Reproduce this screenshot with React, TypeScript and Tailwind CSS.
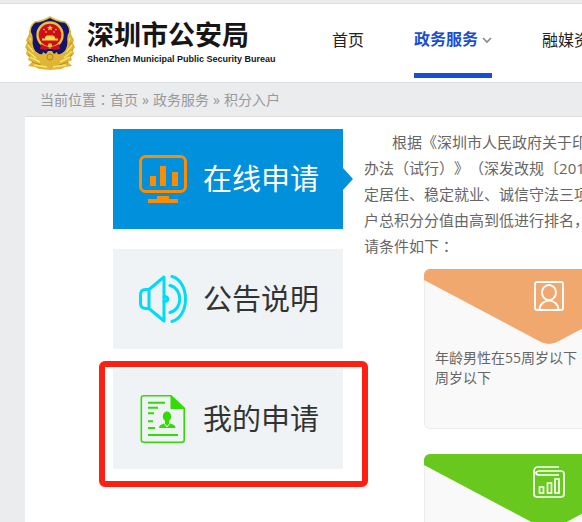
import type { ReactNode } from 'react'

const Emblem = () => (
  <svg viewBox="0 0 50 54" className="w-[50px] h-[54px] shrink-0" role="img" aria-label="警徽">
    {/* wheat wreath */}
    <path
      d="M9 9 Q4 13 4 18 L1 24 L2 27 L0 31 L2 34 L1 38 L4 41 L3 44 L7 46 L3 50 L10 51 L14 53 L25 54 L36 53 L40 51 L47 50 L43 46 L47 44 L46 41 L49 38 L48 34 L50 31 L48 27 L49 24 L46 18 Q46 13 41 9 Z"
      fill="#e0b536"
    />
    <path
      d="M3 26 L8 34 M2 33 L9 40 M3 39 L12 45 M7 46 L16 49 M47 26 L42 34 M48 33 L41 40 M47 39 L38 45 M43 46 L34 49"
      stroke="#b08424"
      strokeWidth=".8"
    />
    <path
      d="M5 22 L9 30 M3 29 L9 36 M3 35 L11 42 M5 41 L15 46 M45 22 L41 30 M47 29 L41 36 M47 35 L39 42 M45 41 L35 46 M9 49 L22 51 M41 49 L28 51"
      stroke="#f7e572"
      strokeWidth="1.5"
    />
    {/* shield */}
    <path
      d="M25 1 Q31 5 40 6 Q45 10 45 16 Q43 19 43 23 Q44 31 40 36 L36 39 H14 L10 36 Q6 31 7 23 Q7 19 5 16 Q5 10 10 6 Q19 5 25 1 Z"
      fill="#15146c"
      stroke="#e3b93a"
      strokeWidth="1.6"
    />
    <path
      d="M12 37 L17 39 L18 36 L21 38 L23 35 H27 L29 38 L32 36 L33 39 L38 37 Q34 44 25 47 Q16 44 12 37Z"
      fill="#e0b536"
    />
    <circle cx="25" cy="19" r="12.5" fill="#cd1018" stroke="#e8c13e" strokeWidth="2.4" />
    <path d="M16 28 Q25 34 34 28 L35 33 L29 34 L25 32 L21 34 L15 33Z" fill="#cd1018" />
    <g fill="#f7dc4a">
      <path d="M25 9 L25.800 11 H28 L26.300 12.400 L27 14.500 L25 13.200 L23 14.500 L23.700 12.400 L22 11 H24.200 Z" />
      <circle cx="19" cy="13.500" r=".8" />
      <circle cx="21" cy="16" r=".8" />
      <circle cx="29" cy="16" r=".8" />
      <circle cx="31" cy="13.500" r=".8" />
      <path d="M20 21 L22 19.500 H28 L30 21 V22.500 H33 V24.500 H17 V22.500 H20Z" />
    </g>
    <circle cx="25" cy="29.500" r="2.2" fill="#e8c13e" />
    <circle cx="25" cy="41" r="3" fill="none" stroke="#b08424" />
  </svg>
)

const MonitorIcon = () => (
  <svg viewBox="0 0 48 48" className="size-12 shrink-0" aria-hidden="true">
    <rect x="1.500" y="1.500" width="45" height="35" rx="5" fill="none" stroke="#ff8c00" strokeWidth="3" />
    <path d="M11 21h6v10h-6zM21 11h6v20h-6zM33 17h6v14h-6zM18 41h12v3h9v4H9v-4h9z" fill="#ff8c00" />
  </svg>
)

const SpeakerIcon = () => (
  <svg
    viewBox="0 0 48 48"
    className="size-12 shrink-0"
    fill="none"
    stroke="#00dcf5"
    strokeWidth="3"
    strokeLinecap="round"
    strokeLinejoin="round"
    aria-hidden="true"
  >
    <path d="M25 2v44L10 33.500H6.500Q1.500 33.500 1.500 28V20Q1.500 14.500 6.500 14.500H10ZM10 14.500v19" />
    <path d="M25 21.500c5 0 5 5 0 5M31 10.500c13 3 13 24 0 27M33 1.500c18 5 18 40 0 45" />
  </svg>
)

const ResumeIcon = () => (
  <svg viewBox="0 0 48 48" className="size-12 shrink-0" aria-hidden="true">
    <path
      d="M4 .8H32L45.200 13V45Q45.200 47.200 43 47.200H4.500Q2.300 47.200 2.300 45V3Q2.300 .8 4.500 .8Z"
      fill="none"
      stroke="#32dc00"
      strokeWidth="1.6"
    />
    <path d="M31.500 .8L45.500 14H31.500Z" fill="#32dc00" />
    <path d="M9 7.800h17M9 12.800h10M9 18.200h6M9 26.200h5M9 33h7M9 40h30" stroke="#32dc00" strokeWidth="2" />
    <ellipse cx="28" cy="21.500" rx="4.200" ry="5" fill="#32dc00" />
    <path d="M26 25h4v3l5 2q1.500 1 1.500 3H20q0-2 1.500-3L26 28z" fill="#32dc00" />
    <path d="M25 28l3 4 3-4" stroke="#eff3f6" fill="none" />
  </svg>
)

const PortraitIcon = () => (
  <svg viewBox="0 0 30 30" className="size-[30px]" fill="none" stroke="#fff" strokeWidth="1.9" aria-hidden="true">
    <rect x="1" y="1" width="28" height="28" rx="2" />
    <ellipse cx="15" cy="11.500" rx="7" ry="7.500" />
    <path d="M5.500 29C6 16.500 24 16.500 24.500 29" />
  </svg>
)

const LedgerIcon = () => (
  <svg viewBox="0 0 32 32" className="size-8" fill="none" stroke="#fff" strokeWidth="1.7" aria-hidden="true">
    <path d="M26 1H5Q1 1 1 6V28Q1 31 4 31H28Q31 31 31 28V8Q31 5 28 5H6Q3 5.500 3 7Q3 9 7 9H26" />
    <path d="M6.500 21h4v6h-4zM14.500 17h4v10h-4zM22 13h4v14h-4z" />
  </svg>
)

// full-width punctuation set in the middle of its cell
const Mark = ({ children }: { children: ReactNode }) => (
  <span className="font-['Noto_Sans_CJK_TC',sans-serif]">{children}</span>
)

const menu = [
  { label: '在线申请', icon: <MonitorIcon />, active: true, marked: false },
  { label: '公告说明', icon: <SpeakerIcon />, active: false, marked: false },
  { label: '我的申请', icon: <ResumeIcon />, active: false, marked: true },
]

const conditions = [
  { icon: <PortraitIcon />, fill: '#f0a86e', lines: ['年龄男性在55周岁以下', '周岁以下'] },
  { icon: <LedgerIcon />, fill: '#69c81e', lines: [] },
]

const Header = () => (
  <header className="border-y border-[#dcdee0] bg-white mt-[3px]">
    <div className="flex h-[78px] pl-[25px]">
      <a href="#" className="flex shrink-0 items-center gap-3 w-[307px]">
        <Emblem />
        <span className="flex flex-col text-[#161616] font-bold">
          <span className="text-[27px] leading-8">深圳市公安局</span>
          <span className="font-['Liberation_Sans',sans-serif] text-[9px] leading-4 whitespace-nowrap">
            ShenZhen Municipal Public Security Bureau
          </span>
        </span>
      </a>
      <nav className="flex gap-[50px] text-base whitespace-nowrap text-[#222]">
        <a href="#" className="h-[74px] leading-[72px]">首页</a>
        <a
          href="#"
          className="flex h-[74px] items-center gap-1 border-b-5 border-[#1a4ed2] font-bold leading-[72px] text-[#1a4ed2]"
        >
          政务服务
          <svg viewBox="0 0 10 7" className="w-[10px] h-[7px] mt-1" fill="none" stroke="#888" strokeWidth="1.6" aria-hidden="true">
            <path d="M1 1l4 4 4-4" />
          </svg>
        </a>
        <a href="#" className="h-[74px] leading-[72px]">融媒资</a>
      </nav>
    </div>
  </header>
)

const App = () => {
  return (
    <div className="flow-root min-h-screen overflow-x-hidden bg-[#ebecee] font-['Open_Sans','Noto_Sans_CJK_SC',sans-serif] [text-spacing-trim:space-all]">
      <Header />
      <div className="ml-[25px]">
        <nav
          aria-label="当前位置"
          className="flex gap-1 border-b border-[#dcdee0] pl-[15px] text-sm leading-[33px] whitespace-nowrap text-[#999]"
        >
          <span>当前位置<Mark>：</Mark><a href="#">首页</a></span>
          <span>»</span>
          <a href="#">政务服务</a>
          <span>»</span>
          <a href="#">积分入户</a>
        </nav>

        <main className="flex min-h-[405px] gap-[21px] bg-white pl-[88px] pt-3">
          <nav className="flex w-[230px] shrink-0 flex-col gap-5">
            {menu.map((item) => (
              <a
                key={item.label}
                href="#"
                className={`relative flex h-[100px] items-center gap-4 pl-[26px] text-[29px] ${
                  item.active ? 'bg-[#0090dc] text-white' : 'bg-[#eff3f6] text-[#333]'
                }`}
              >
                {item.icon}
                {item.label}
                {item.active && (
                  <svg viewBox="0 0 10 22" className="absolute left-full top-[39px] w-[10px] h-[22px]" aria-hidden="true">
                    <path d="M0 0l10 11L0 22z" fill="#0090dc" />
                  </svg>
                )}
                {item.marked && (
                  <span className="absolute -top-2 -bottom-[18px] -left-[14px] -right-[25px] rounded-md border-6 border-[#ff2012]" />
                )}
              </a>
            ))}
          </nav>

          <section className="min-w-0 flex-1 overflow-hidden pb-5">
            <p className="indent-7 text-[15px] leading-[26px] whitespace-nowrap text-[#666]">
              <span>根据《深圳市人民政府关于印</span>
              <span className="block indent-0">办法<Mark>（</Mark>试行<Mark>）</Mark>》<Mark>（</Mark>深发改规〔201</span>
              <span className="block indent-0">定居住、稳定就业、诚信守法三项</span>
              <span className="block indent-0">户总积分分值由高到低进行排名，</span>
              <span className="block indent-0">请条件如下<Mark>：</Mark></span>
            </p>
            <div className="mt-[10px] flex flex-col gap-[25px] pl-[60px]">
              {conditions.map((item) => (
                <article
                  key={item.fill}
                  className="min-h-40 w-[250px] overflow-hidden rounded-md bg-[#f9f9f9] inset-ring inset-ring-[#ececec]"
                >
                  <div className="grid">
                    <svg viewBox="0 0 250 75" className="col-start-1 row-start-1 w-full" aria-hidden="true">
                      <path d="M0 0H250V11L135 72Q125 78 115 72L0 11Z" fill={item.fill} />
                    </svg>
                    <div className="col-start-1 row-start-1 flex justify-center pt-3">{item.icon}</div>
                  </div>
                  <p className="px-[11px] pt-1 text-sm leading-5 whitespace-nowrap text-[#666]">
                    {item.lines.map((line) => (
                      <span key={line} className="block">{line}</span>
                    ))}
                  </p>
                </article>
              ))}
            </div>
          </section>
        </main>
      </div>
    </div>
  )
}

export default App
